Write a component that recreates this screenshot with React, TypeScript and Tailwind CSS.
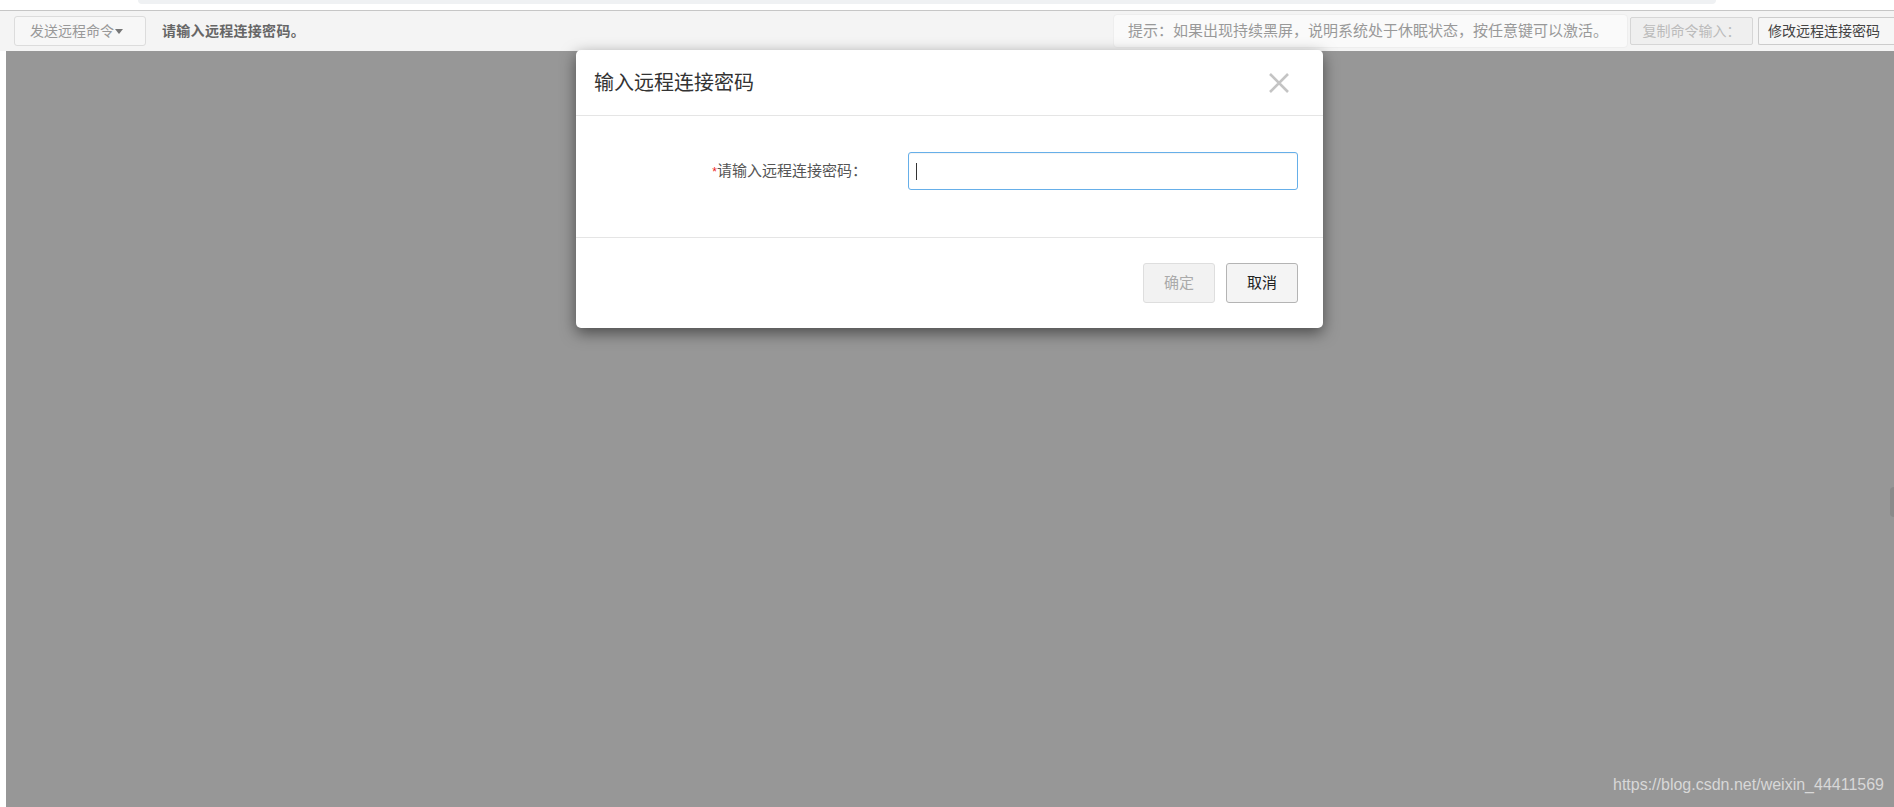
import React from "react";

const font = "font-['Liberation_Sans','Noto_Sans_CJK_SC',sans-serif]";

function CloseIcon() {
  return (
    <svg width="20" height="20" viewBox="0 0 20 20" fill="none">
      <path d="M1 1 L19 19 M19 1 L1 19" stroke="#c4c4c4" strokeWidth="2.6" />
    </svg>
  );
}

function Toolbar() {
  return (
    <div className="flex h-[40px] items-center bg-[#f4f4f4]">
      <button className="ml-[14px] flex h-[30px] w-[132px] items-center rounded-[3px] border border-[#dcdcdc] bg-[#f7f7f7] pl-[15px] text-[14px] text-[#999]">
        发送远程命令
        <span className="ml-[1px] h-0 w-0 border-x-[4px] border-t-[5px] border-x-transparent border-t-[#777]" />
      </button>
      <span className="ml-[16px] text-[14px] font-bold tracking-[0.3px] text-[#666]">请输入远程连接密码。</span>
      <div className="flex-1" />
      <div className="flex items-center">
        <div className="flex h-[34px] w-[515px] items-center rounded-[4px] border border-[#eeeeee] bg-[#fafafa] pl-[14px] text-[15px] text-[#999]">
          提示：如果出现持续黑屏，说明系统处于休眠状态，按任意键可以激活。
        </div>
        <button className="ml-[2px] h-[28px] w-[123px] rounded-[2px] border border-[#d6d6d6] bg-[#efefef] text-[14px] text-[#bbb]">
          复制命令输入：
        </button>
        <button className="ml-[5px] h-[28px] w-[136px] whitespace-nowrap rounded-l-[2px] border border-r-0 border-[#cccccc] bg-[#f6f6f6] pl-[9px] text-left text-[14px] text-[#444]">
          修改远程连接密码
        </button>
      </div>
    </div>
  );
}

function PasswordModal() {
  return (
    <div className="absolute left-[576px] top-[50px] w-[747px] rounded-[5px] bg-white shadow-[0_5px_15px_rgba(0,0,0,0.5)]">
      <div className="flex h-[66px] items-center justify-between border-b border-[#e5e5e5] pl-[18px] pr-[34px]">
        <h4 className="text-[20px] text-[#333]">输入远程连接密码</h4>
        <CloseIcon />
      </div>
      <div className="flex items-center border-b border-[#e5e5e5] pb-[47px] pl-[15px] pt-[36px]">
        <label className="w-[276px] text-right text-[15px] text-[#555]">
          <span className="text-[12px] text-[#e22]">*</span>请输入远程连接密码：
        </label>
        <div className="ml-[41px] flex h-[38px] w-[390px] items-center rounded-[3px] border border-[#66afe9] pl-[7px] shadow-[inset_0_1px_1px_rgba(0,0,0,0.05)]">
          <span className="h-[17px] w-px bg-[#333]" />
        </div>
      </div>
      <div className="flex justify-end gap-[11px] pb-[25px] pr-[25px] pt-[25px]">
        <button className="h-[40px] w-[72px] rounded-[3px] border border-[#dedede] bg-[#f2f2f2] text-[15px] text-[#aaa]">
          确定
        </button>
        <button className="h-[40px] w-[72px] rounded-[3px] border border-[#b4b4b4] bg-[#f4f4f4] text-[15px] text-[#222]">
          取消
        </button>
      </div>
    </div>
  );
}

export default function App() {
  return (
    <div className={`relative flex h-[807px] w-[1894px] flex-col overflow-hidden bg-white ${font}`}>
      <div className="h-[10px] bg-white">
        <div className="ml-[138px] h-[4px] w-[1578px] rounded-b-[8px] bg-[#eff1f3]" />
      </div>
      <div className="h-px bg-[#c6c6c6]" />
      <Toolbar />
      <div className="flex flex-1">
        <div className="w-[6px] bg-white" />
        <div className="relative flex-1 bg-[#979797]">
          <div className="absolute right-0 top-[436px] h-[30px] w-[4px] rounded-l-full bg-[#8a8a8a]" />
          <span className="absolute bottom-[10px] right-[10px] font-['Liberation_Sans',sans-serif] text-[16px] text-[#d8d8d8]">
            https://blog.csdn.net/weixin_44411569
          </span>
        </div>
      </div>
      <PasswordModal />
    </div>
  );
}
